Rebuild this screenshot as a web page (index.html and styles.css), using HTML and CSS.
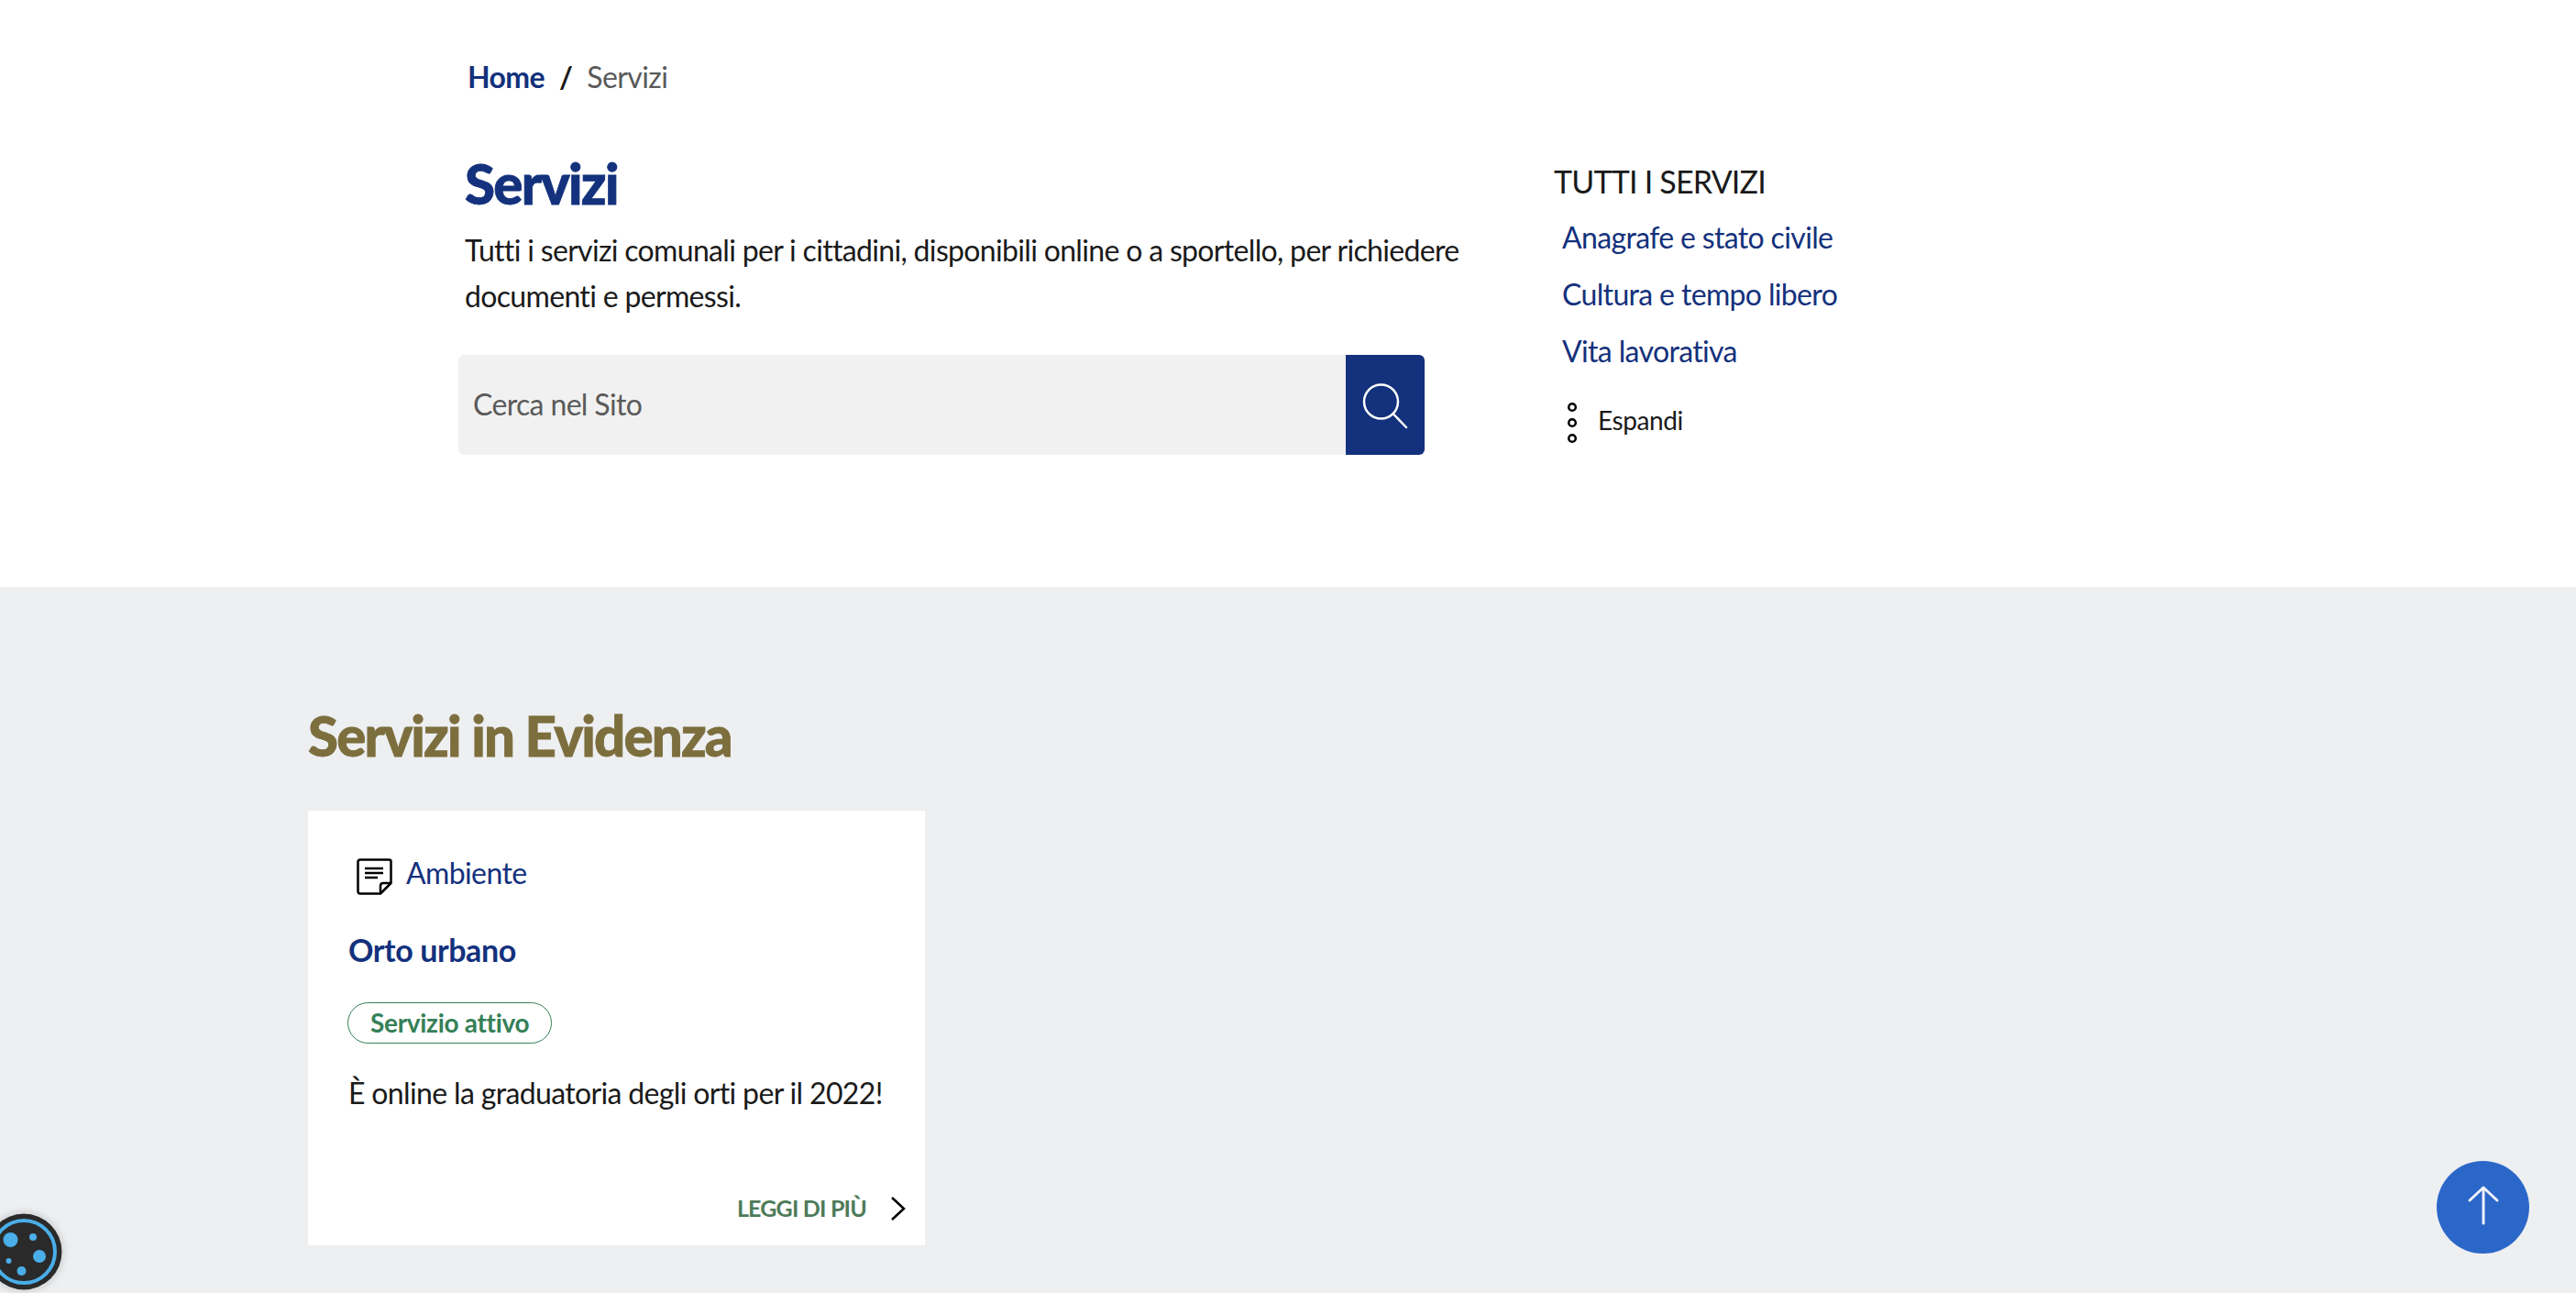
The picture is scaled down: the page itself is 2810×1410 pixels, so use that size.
FILE: index.html
```html
<!DOCTYPE html>
<html>
<head>
<title>Servizi</title>
<link rel="stylesheet" href="styles.css">
</head>
<body>
<section class="top">
  <div class="main">
    <nav class="crumbs">
      <a class="crumb-link" href="#">Home</a>
      <span class="crumb-sep">/</span>
      <span class="crumb-here">Servizi</span>
    </nav>
    <h1 class="title">Servizi</h1>
    <p class="intro">Tutti i servizi comunali per i cittadini, disponibili online o a sportello, per richiedere documenti e permessi.</p>
    <form class="search">
      <div class="search-field">Cerca nel Sito</div>
      <div class="search-btn">
        <svg width="60" height="60" viewBox="0 0 60 60" fill="none" stroke="#fff" stroke-width="2.5" stroke-linecap="round">
          <circle cx="25.500" cy="26" r="18.5"/>
          <path d="M38.500 39 53 54"/>
        </svg>
      </div>
    </form>
  </div>
  <aside class="side">
    <h2 class="side-title">TUTTI I SERVIZI</h2>
    <a class="side-link" href="#">Anagrafe e stato civile</a>
    <a class="side-link" href="#">Cultura e tempo libero</a>
    <a class="side-link" href="#">Vita lavorativa</a>
    <div class="expand">
      <svg class="expand-icon" width="12" height="46" viewBox="0 0 12 46" fill="none" stroke="#000" stroke-width="2.5">
        <circle cx="6" cy="6" r="3.8"/>
        <circle cx="6" cy="23" r="3.8"/>
        <circle cx="6" cy="40" r="3.8"/>
      </svg>
      <span>Espandi</span>
    </div>
  </aside>
</section>
<section class="featured">
  <h2 class="featured-title">Servizi in Evidenza</h2>
  <article class="card">
    <div class="card-cat">
      <svg class="cat-icon" width="40" height="40" viewBox="0 0 40 40" fill="none" stroke="#000" stroke-width="2.5" stroke-linejoin="round">
        <path d="M5 1.5H36.500Q38.500 1.500 38.500 3.500V27L27 38.500H5Q2.500 38.500 2.500 36V4Q2.500 1.500 5 1.500Z"/>
        <path d="M38.500 27H30Q27 27 27 30V38.500"/>
        <path d="M10 11H30M10 16H30M10 21H24"/>
      </svg>
      <a class="cat-link" href="#">Ambiente</a>
    </div>
    <h3 class="card-title">Orto urbano</h3>
    <span class="badge">Servizio attivo</span>
    <p class="card-text">È online la graduatoria degli orti per il 2022!</p>
    <a class="more" href="#">
      <span>LEGGI DI PIÙ</span>
      <svg width="18" height="28" viewBox="0 0 18 28" fill="none" stroke="#000" stroke-width="2.500">
        <path d="M2 2 15 14 2 26"/>
      </svg>
    </a>
  </article>
</section>
<a class="to-top" href="#">
  <svg class="to-top-icon" width="40" height="46" viewBox="0 0 40 46" fill="none" stroke="#eef1f8" stroke-width="3" stroke-linecap="round" stroke-linejoin="round">
    <path d="M20 43V4M5 18 20 4 35 18"/>
  </svg>
</a>
<div class="cookie">
  <svg width="84" height="84" viewBox="0 0 84 84">
    <circle cx="42" cy="42" r="41.500" fill="#2a2a2a"/>
    <circle cx="42" cy="42" r="34" fill="none" stroke="#4aaee8" stroke-width="4"/>
    <g fill="#4aaee8">
      <circle cx="27.500" cy="29" r="8"/>
      <circle cx="52" cy="26" r="4"/>
      <circle cx="59" cy="47" r="7"/>
      <circle cx="25.500" cy="52" r="3"/>
      <circle cx="39.500" cy="63" r="5"/>
    </g>
  </svg>
</div>
</body>
</html>
```

FILE: styles.css
```css
* {
  box-sizing: border-box;
}
body {
  margin: 0;
  height: 1410px;
  overflow: hidden;
  font-family: "Lato", "Open Sans", sans-serif;
  font-weight: 400;
  color: #1a1a1a;
  background-color: #fff;
}
a {
  text-decoration: none;
}
.top {
  display: flex;
  height: 640px;
  padding-left: 500px;
}
.main {
  width: 1099px;
}
.crumbs {
  display: flex;
  align-items: center;
  height: 44px;
  margin-top: 61px;
  padding-left: 10px;
  font-size: 32px;
  letter-spacing: -0.6px;
}
.crumb-link {
  color: #13317c;
  font-weight: 700;
}
.crumb-sep {
  margin: 0 16px;
  font-weight: 700;
}
.crumb-here {
  color: #5a5a5a;
}
.title {
  margin: 60px 0 0 7px;
  font-size: 60px;
  line-height: 70px;
  font-weight: 900;
  letter-spacing: -1.7px;
  color: #13317c;
  -webkit-text-stroke: 0.8px #13317c;
}
.intro {
  width: 1095px;
  margin: 13px 0 0 7px;
  font-size: 32px;
  line-height: 50px;
  letter-spacing: -0.67px;
}
.search {
  display: flex;
  width: 1054px;
  height: 109px;
  margin-top: 39px;
}
.search-field {
  flex: 1;
  display: flex;
  align-items: center;
  padding: 0 0 2px 16px;
  font-size: 32px;
  letter-spacing: -0.65px;
  color: #5a5a5a;
  background-color: #f1f1f1;
  border-radius: 6px 0 0 6px;
}
.search-btn {
  display: flex;
  align-items: center;
  justify-content: center;
  width: 86px;
  background-color: #13317c;
  border-radius: 0 6px 6px 0;
}
.side {
  display: flex;
  flex-direction: column;
  margin-left: 96px;
  padding-top: 174px;
}
.side-title {
  margin: 0 0 6px;
  font-size: 34px;
  line-height: 48px;
  font-weight: 400;
  letter-spacing: -0.8px;
}
.side-link {
  margin-left: 9px;
  font-size: 32px;
  line-height: 62px;
  font-weight: 400;
  letter-spacing: -0.65px;
  color: #13317c;
}
.expand {
  display: flex;
  align-items: center;
  gap: 22px;
  height: 46px;
  margin: 21px 0 0 14px;
  font-size: 28px;
  letter-spacing: -0.4px;
}
.expand-icon {
  margin-top: 5px;
}
.featured {
  height: 770px;
  padding: 130px 0 0 336px;
  background-color: #edeff1;
}
.featured-title {
  margin: 0;
  font-size: 60px;
  line-height: 64px;
  font-weight: 900;
  letter-spacing: -1.85px;
  color: #7c6e3d;
  -webkit-text-stroke: 0.8px #7c6e3d;
}
.card {
  display: flex;
  flex-direction: column;
  align-items: flex-start;
  width: 673px;
  height: 474px;
  margin-top: 50px;
  padding: 50px 20px 0 44px;
  background-color: #fff;
}
.card-cat {
  display: flex;
  align-items: center;
  height: 40px;
  margin-left: 8px;
}
.cat-icon {
  margin: 4px 15px 0 0;
}
.cat-link {
  margin-bottom: 6px;
  font-size: 32px;
  letter-spacing: -0.6px;
  color: #13317c;
}
.card-title {
  margin: 40px 0 0;
  font-size: 34px;
  line-height: 44px;
  font-weight: 700;
  letter-spacing: -0.4px;
  color: #13317c;
}
.badge {
  margin: 35px 0 0 -1px;
  height: 45px;
  padding: 0 24px;
  line-height: 42px;
  font-size: 28px;
  font-weight: 700;
  letter-spacing: -0.3px;
  color: #358057;
  border: 1px solid #358057;
  border-radius: 23px;
}
.card-text {
  margin: 32px 0 0;
  font-size: 32px;
  line-height: 44px;
  letter-spacing: -0.65px;
  white-space: nowrap;
}
.more {
  display: flex;
  align-items: center;
  gap: 26px;
  align-self: flex-end;
  margin-top: auto;
  margin-bottom: 24px;
  font-size: 25px;
  font-weight: 700;
  letter-spacing: -0.8px;
  color: #4e7b5a;
}
.more span {
  margin-bottom: 2px;
}
.to-top {
  position: fixed;
  left: 2658px;
  top: 1266px;
  display: flex;
  align-items: center;
  justify-content: center;
  width: 101px;
  height: 101px;
  background-color: #2b67c8;
  border-radius: 50%;
}
.to-top-icon {
  margin-bottom: 6px;
}
.cookie {
  position: fixed;
  left: -16px;
  top: 1323px;
  width: 84px;
  height: 84px;
  border-radius: 50%;
  box-shadow: 0 0 10px rgba(0, 0, 0, 0.2);
}
.cookie svg {
  display: block;
}
```
